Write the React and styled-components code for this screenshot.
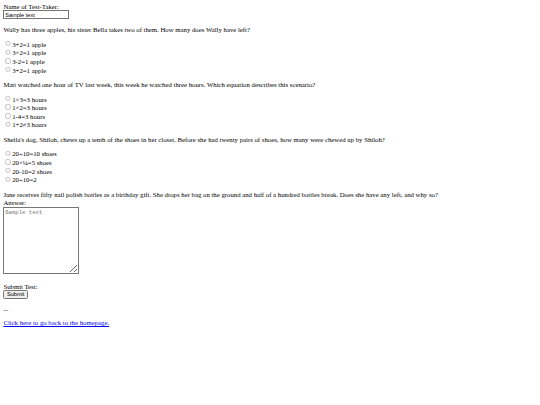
import React from "react";
import styled, { createGlobalStyle } from "styled-components";

const GlobalStyle = createGlobalStyle`
  html, body {
    margin: 0;
    padding: 0;
    background: #ffffff;
  }
`;

const Page = styled.div`
  zoom: 0.421875;
  padding: 8px;
  font-family: "Liberation Serif", "Times New Roman", serif;
  font-size: 16px;
  color: #000000;
`;

const Form = styled.form`
  display: block;
`;

const FieldLabel = styled.div`
  display: block;
`;

const TextInput = styled.input`
  box-sizing: border-box;
  width: 156px;
  height: 21px;
  font-family: "Liberation Sans", Arial, sans-serif;
  font-size: 13.33px;
`;

const Question = styled.p`
  margin: 16px 0;
`;

const AnswerBlock = styled.p`
  margin: 16px 0;
  line-height: 19.5px;
`;

const OptionRow = styled.label`
  display: block;
  height: 20.4px;
  line-height: 20.4px;
`;

const Radio = styled.input`
  margin: 3px 3px 0 5px;
`;

const AnswerBox = styled.textarea`
  box-sizing: border-box;
  width: 180px;
  height: 158px;
  font-family: "Liberation Mono", "Courier New", monospace;
  font-size: 13.33px;
  line-height: normal;
`;

const SubmitButton = styled.input`
  box-sizing: border-box;
  height: 21px;
  font-family: "Liberation Sans", Arial, sans-serif;
  font-size: 13.33px;
`;

const BackLink = styled.a`
  color: #0000ee;
  text-decoration: underline;
`;

const questions = [
  {
    name: "q1",
    text: "Wally has three apples, his sister Bella takes two of them. How many does Wally have left?",
    options: ["3+2=1 apple", "3×2=1 apple", "3-2=1 apple", "3+2=1 apple"],
  },
  {
    name: "q2",
    text: "Matt watched one hour of TV last week, this week he watched three hours. Which equation describes this scenario?",
    options: ["1×3=3 hours", "1×2=3 hours", "1-4=3 hours", "1+2≠3 hours"],
  },
  {
    name: "q3",
    text: "Sheila's dog, Shiloh, chews up a tenth of the shoes in her closet. Before she had twenty pairs of shoes, how many were chewed up by Shiloh?",
    options: ["20÷10=10 shoes", "20×¼=5 shoes", "20-10=2 shoes", "20÷10=2"],
  },
];

export default function App() {
  return (
    <>
      <GlobalStyle />
      <Page>
        <Form onSubmit={(e) => e.preventDefault()}>
          <FieldLabel>Name of Test-Taker:</FieldLabel>
          <TextInput type="text" defaultValue="Sample text" />
          {questions.map((q) => (
            <React.Fragment key={q.name}>
              <Question>{q.text}</Question>
              {q.options.map((o, i) => (
                <OptionRow key={i}>
                  <Radio type="radio" name={q.name} value={i} />
                  {o}
                </OptionRow>
              ))}
            </React.Fragment>
          ))}
          <AnswerBlock>
            Jane receives fifty nail polish bottles as a birthday gift. She drops her bag on the ground and half of a hundred bottles break. Does she have any left, and why so?
            <br />
            Answer:
            <br />
            <AnswerBox rows={10} placeholder="Sample text" />
          </AnswerBlock>
          <Question>
            Submit Test:
            <br />
            <SubmitButton type="submit" value="Submit" />
          </Question>
          <Question>...</Question>
          <Question>
            <BackLink href="#">Click here to go back to the homepage.</BackLink>
          </Question>
        </Form>
      </Page>
    </>
  );
}
